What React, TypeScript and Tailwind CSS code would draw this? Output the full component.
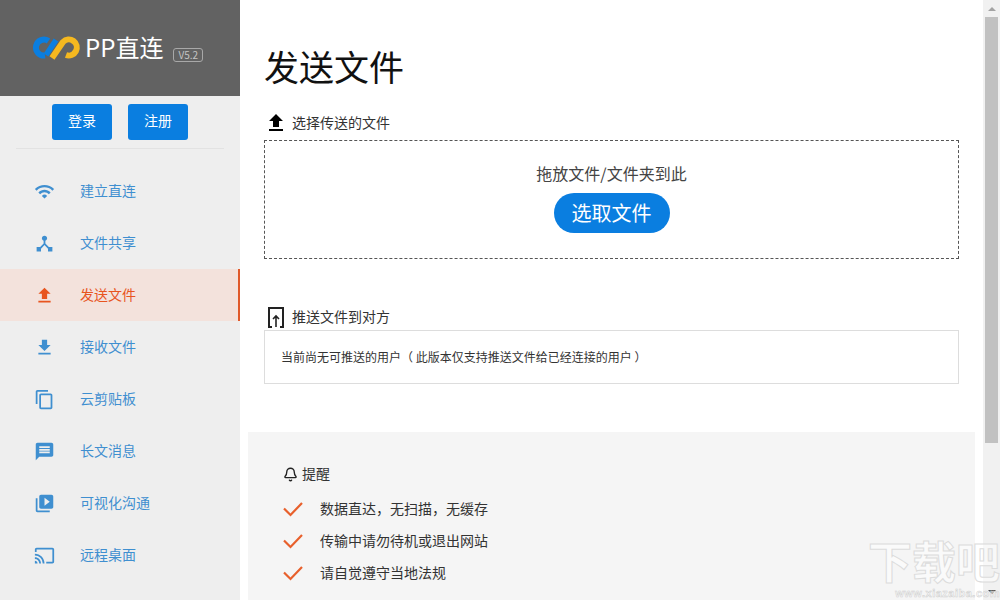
import { Bell } from 'lucide-react';
import { MdWifi, MdDeviceHub, MdFileUpload, MdFileDownload, MdContentCopy, MdMessage, MdVideoLibrary, MdCast } from 'react-icons/md';

const navItems = [
  { label: '建立直连', icon: MdWifi },
  { label: '文件共享', icon: MdDeviceHub },
  { label: '发送文件', icon: MdFileUpload, active: true },
  { label: '接收文件', icon: MdFileDownload },
  { label: '云剪贴板', icon: MdContentCopy },
  { label: '长文消息', icon: MdMessage },
  { label: '可视化沟通', icon: MdVideoLibrary },
  { label: '远程桌面', icon: MdCast },
];

const tips = ['数据直达，无扫描，无缓存', '传输中请勿待机或退出网站', '请自觉遵守当地法规'];

function Logo() {
  return (
    <svg width="48" height="24" viewBox="0 0 48 24" fill="none" strokeWidth="6">
      <path d="M15.5 5 A8 8 0 1 0 12 19.5" stroke="#0a7ee0" />
      <path d="M13 19 L23 4" stroke="#0a7ee0" strokeWidth="5.5" />
      <path d="M19 22 L30 6 A8 8 0 1 1 33 19" stroke="#f5b81f" />
    </svg>
  );
}

function Check() {
  return (
    <svg width="20" height="20" viewBox="0 0 20 20" fill="none" stroke="#e8602c" strokeWidth="2.2">
      <path d="M1 9.5 L7.5 16 L19 4" />
    </svg>
  );
}

function Sidebar() {
  return (
    <aside className="w-[240px] shrink-0 bg-[#eeeeee] flex flex-col">
      <div className="h-[96px] bg-[#626262] flex items-center pl-[33px]">
        <Logo />
        <span className="ml-[4px] pb-[3px] text-[24px] leading-none text-white">PP直连</span>
        <span className="ml-[10px] mt-[14px] border border-[#a8a8a8] rounded-[3px] px-[4px] text-[10px] leading-[12px] text-[#c4c4c4]">V5.2</span>
      </div>
      <div className="mx-[16px] h-[53px] border-b border-[#e2e2e2] flex justify-center gap-[16px] pt-[8px]">
        <button className="w-[60px] h-[36px] pb-[3px] rounded-[3px] bg-[#0a7ee0] text-white text-[14px]">登录</button>
        <button className="w-[60px] h-[36px] pb-[3px] rounded-[3px] bg-[#0a7ee0] text-white text-[14px]">注册</button>
      </div>
      <nav className="mt-[16px]">
        {navItems.map((item) => {
          const Icon = item.icon;
          return (
            <div
              key={item.label}
              className={
                item.active
                  ? 'h-[52px] flex items-center pl-[34px] bg-[#f3e2dc] border-r-2 border-[#e0592a] text-[#e8551f]'
                  : 'h-[52px] flex items-center pl-[34px] text-[#3f8fd0]'
              }
            >
              <Icon size={21} />
              <span className="ml-[25px] pb-[2px] text-[14px]">{item.label}</span>
            </div>
          );
        })}
      </nav>
    </aside>
  );
}

function Main() {
  return (
    <main className="flex-1 min-w-0 px-[8px] text-[#333333]">
      <div className="px-[16px]">
        <h1 className="h-[111px] pt-[43px] text-[35px] leading-[46px] text-[#111111] font-normal">发送文件</h1>
        <div className="flex items-center h-[24px] text-[14px]">
          <MdFileUpload size={24} className="text-black" />
          <span className="ml-[4px] pb-[2px]">选择传送的文件</span>
        </div>
        <div className="mt-[5px] h-[119px] border border-dashed border-[#555555] flex flex-col items-center">
          <p className="mt-[21px] text-[16px] leading-[22px] text-[#444444]">拖放文件/文件夹到此</p>
          <button className="mt-[9px] w-[116px] h-[40px] rounded-full bg-[#0a7ee0] text-white text-[20px]">选取文件</button>
        </div>
        <div className="flex items-center h-[24px] mt-[46px] text-[14px]">
          <svg width="24" height="24" viewBox="0 0 24 24" fill="none" stroke="#222222" strokeWidth="2">
            <path d="M8 22 H5 V3 H19 V22 H16" />
            <path d="M12 22 V11 M9 14 L12 11 L15 14" strokeWidth="1.6" />
          </svg>
          <span className="ml-[4px] pb-[2px]">推送文件到对方</span>
        </div>
        <div className="mt-[1px] h-[54px] border border-[#dddddd] flex items-center pl-[16px] text-[12px]">
          当前尚无可推送的用户（ 此版本仅支持推送文件给已经连接的用户 ）
        </div>
      </div>
      <section className="mt-[48px] h-[200px] bg-[#f5f5f5] pl-[35px] pt-[32px]">
        <div className="flex items-center h-[20px] text-[14px]">
          <Bell size={15} strokeWidth={2.2} className="text-[#222222]" />
          <span className="ml-[4px] pb-[2px]">提醒</span>
        </div>
        <ul className="mt-[9px]">
          {tips.map((tip) => (
            <li key={tip} className="flex items-center h-[32px] text-[14px]">
              <Check />
              <span className="ml-[17px] pb-[2px]">{tip}</span>
            </li>
          ))}
        </ul>
      </section>
    </main>
  );
}

function Scrollbar() {
  return (
    <div className="w-[17px] shrink-0 bg-[#f1f1f1] flex flex-col items-center">
      <div className="h-[17px] flex items-center justify-center">
        <div className="w-0 h-0 border-x-[4px] border-x-transparent border-b-[4px] border-b-[#a3a3a3]" />
      </div>
      <div className="w-[13px] h-[426px] bg-[#c1c1c1]" />
      <div className="mt-auto h-[17px] flex items-center justify-center">
        <div className="w-0 h-0 border-x-[4px] border-x-transparent border-t-[4px] border-t-[#505050]" />
      </div>
    </div>
  );
}

export default function App() {
  return (
    <div className="relative w-[1000px] h-[600px] overflow-hidden flex bg-white font-['Noto_Sans_CJK_SC','Noto_Sans',sans-serif]">
      <Sidebar />
      <Main />
      <Scrollbar />
      {/* watermark */}
      <div className="absolute right-0 bottom-0 w-[134px] text-right pointer-events-none font-['Liberation_Sans','Noto_Sans_CJK_SC',sans-serif]">
        <div className="h-[46px] text-[44px] leading-[46px] font-bold text-white/50 [-webkit-text-stroke:1px_#dcdcdc] whitespace-nowrap">下载吧</div>
        <div className="h-[13px] text-[11px] leading-[13px] tracking-[0.5px] font-bold text-white/50 [-webkit-text-stroke:0.5px_#cfcfcf] whitespace-nowrap">www.xiazaiba.com</div>
      </div>
    </div>
  );
}
